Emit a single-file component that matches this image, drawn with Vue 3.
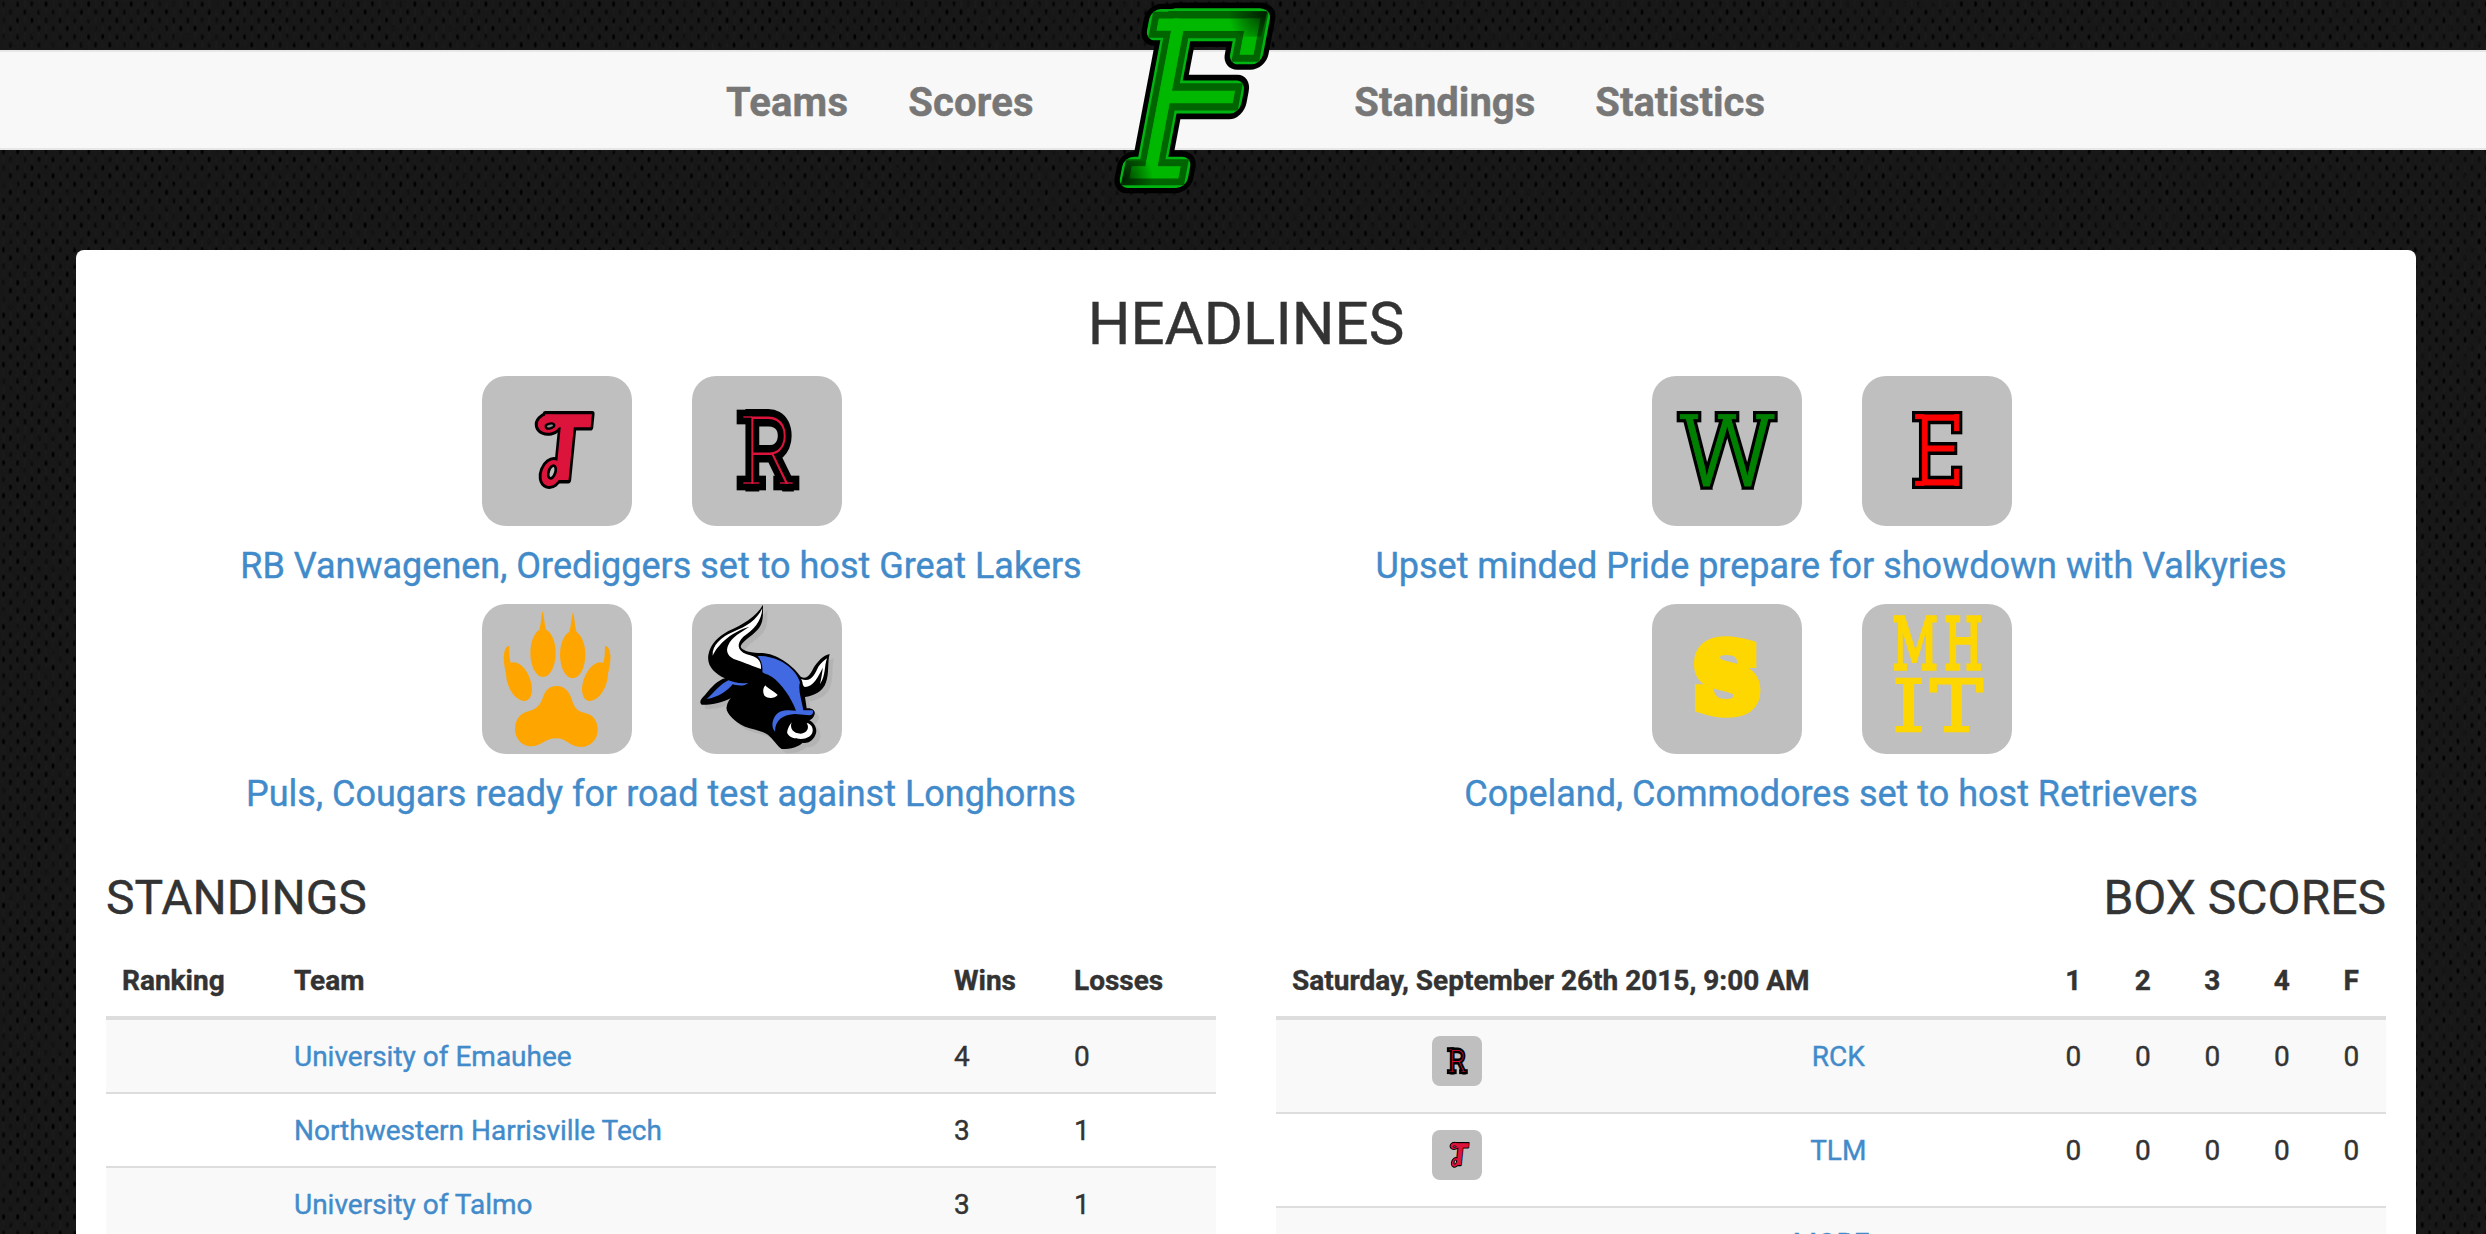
<script setup>
const ctx = document.createElement('canvas').getContext('2d')

// Fits a letter's ink to a box: [x, y, width, height], with an optional slant.
function fit(char, box, family, weight, slant) {
  ctx.font = `${weight} 100px "${family}"`
  const m = ctx.measureText(char)
  const sx = box[2] / (m.actualBoundingBoxRight + m.actualBoundingBoxLeft)
  const sy = box[3] / (m.actualBoundingBoxAscent + m.actualBoundingBoxDescent)
  const tx = box[0] + m.actualBoundingBoxLeft * sx
  const ty = box[1] + box[3] - m.actualBoundingBoxDescent * sy
  return { transform: `matrix(${sx} 0 ${-slant * sy} ${sy} ${tx} ${ty})`, scale: Math.sqrt(sx * sy) }
}

// A letter with optional slab bars, painted once per layer: [colour, outline width].
function letter(char, box, { family = 'DejaVu Serif', weight = 'normal', slant = 0, join = 'miter', slabs = [], layers }) {
  const { transform, scale } = fit(char, box, family, weight, slant)
  const base = box[1] + box[3]
  return layers.flatMap(([color, width]) => [
    {
      tag: 'text',
      text: char,
      attrs: {
        transform,
        'font-family': family,
        'font-weight': weight,
        'font-size': 100,
        fill: color,
        stroke: color,
        'stroke-width': width / scale,
        'stroke-linejoin': join
      }
    },
    ...slabs.map(([x, y, w, h]) => ({
      tag: 'rect',
      attrs: {
        x,
        y,
        width: w,
        height: h,
        fill: color,
        stroke: color,
        'stroke-width': width,
        'stroke-linejoin': join,
        transform: `matrix(1 0 ${-slant} 1 ${slant * base} 0)`
      }
    }))
  ])
}
const path = (d, fill, extra = {}) => ({ tag: 'path', attrs: { d, fill, ...extra } })
const oval = (cx, cy, rx, ry, attrs) => ({ tag: 'ellipse', attrs: { cx, cy, rx, ry, ...attrs } })
const ring = (cx, cy, rx, ry, stroke, width, angle, fill = 'none') =>
  oval(cx, cy, rx, ry, { fill, stroke, 'stroke-width': width, transform: `rotate(${angle} ${cx} ${cy})` })

const bull =
  'M879 29C878 55 883 85 862 105C840 128 815 140 812 155C815 165 835 172 866 174C910 170 965 205 992 245C1010 255 1020 240 1030 220C1042 200 1060 180 1079 177C1072 200 1078 235 1068 262C1060 290 1030 303 1005 306L1010 340C1030 338 1038 350 1033 360C1030 370 1022 374 1018 376C1040 388 1042 410 1036 420C1028 440 1010 446 998 443C985 455 965 462 935 462C925 455 915 440 900 425C880 405 850 405 825 395C790 380 765 350 770 335C772 322 778 312 785 308C755 325 715 330 695 329C685 320 695 310 705 300C725 275 745 255 765 250C735 235 710 215 715 180C722 145 745 125 775 108C815 90 860 65 879 29Z'

const gold = { layers: [['#ffd700', 8]] }
const tee = { family: 'DejaVu Sans', weight: 'bold', slant: 0.1, join: 'round' }

const logos = {
  T: {
    box: '36 33 450 450',
    shapes: [
      ring(237, 176, 24, 17, '#000', 38, -12),
      ring(245, 324, 18, 30, '#000', 38, 22),
      ...letter('T', [205, 144, 142, 200], { ...tee, layers: [['#000', 18]] }),
      ring(237, 176, 24, 17, '#dc143c', 20, -12),
      ring(245, 324, 18, 30, '#dc143c', 21, 22),
      ...letter('T', [205, 144, 142, 200], { ...tee, layers: [['#dc143c', 0]] }),
      ring(240, 183, 13, 7, '#000', 7, -12, '#8a8a8a'),
      ring(246, 321, 10, 20, '#000', 8, 18, '#bfbfbf')
    ]
  },
  R: {
    box: '666 33 450 450',
    shapes: letter('R', [843, 154, 112, 203], {
      family: 'Roboto',
      weight: 100,
      slabs: [[820, 154, 26, 4], [820, 352, 48, 4], [930, 352, 38, 4]],
      layers: [['#000', 40], ['#dc143c', 0]]
    })
  },
  W: {
    box: '36 33 450 450',
    shapes: letter('W', [134, 150, 254, 212], {
      family: 'Roboto',
      weight: 300,
      slabs: [[121, 149, 52, 12], [235, 149, 52, 12], [350, 149, 52, 12]],
      layers: [['#000', 22], ['#008000', 3]]
    })
  },
  E: {
    box: '666 33 450 450',
    shapes: letter('E', [847, 149, 109, 212], {
      family: 'Roboto',
      weight: 300,
      slabs: [[827, 149, 24, 12], [827, 349, 24, 12], [944, 149, 12, 48], [944, 313, 12, 48]],
      layers: [['#000', 22], ['#ff0000', 3]]
    })
  },
  S: {
    box: '36 27 450 450',
    shapes: letter('S', [180, 149, 163, 200], { weight: 'bold', layers: [['#ffd700', 40]] })
  },
  MHIT: {
    box: '666 27 450 450',
    shapes: [
      ...letter('M', [763, 64, 125, 157], gold),
      ...letter('H', [919, 64, 101, 157], gold),
      ...letter('I', [770, 253, 71, 156], gold),
      ...letter('T', [871, 253, 156, 156], gold)
    ]
  },
  paw: {
    box: '36 27 450 450',
    shapes: [
      oval(219, 174, 38, 72, { fill: '#ffa500' }),
      oval(308, 179, 38, 71, { fill: '#ffa500' }),
      oval(147, 260, 34, 61, { fill: '#ffa500', transform: 'rotate(-22 147 260)' }),
      oval(375, 260, 34, 61, { fill: '#ffa500', transform: 'rotate(22 375 260)' }),
      path('M218 47C213 65 213 92 206 112H231C223 92 223 65 218 47ZM309 50C304 68 303 95 297 115H321C314 95 314 68 309 50Z', '#ffa500'),
      path('M118 152C100 155 96 190 109 240L123 205C116 185 118 165 118 152ZM405 152C423 155 427 190 413 240L399 205C406 185 404 165 405 152Z', '#ffa500'),
      path('M260 273C290 273 302 298 308 322C318 350 335 352 352 356C375 362 383 385 383 405C383 435 360 456 332 456C300 456 290 430 258 430C225 430 215 454 182 454C155 454 135 430 135 403C135 375 150 355 175 349C195 343 208 335 217 312C225 288 235 273 260 273Z', '#ffa500')
    ]
  },
  bull: {
    box: '666 27 450 450',
    shapes: [
      path(bull, '#000', { opacity: 0.06, transform: 'translate(13 13)' }),
      path(bull, '#000'),
      path('M877 40C875 80 850 105 820 125C800 145 800 165 830 178C860 185 875 195 873 222C850 215 830 205 800 195C775 188 765 170 775 150C785 125 810 115 838 95C790 108 745 145 728 182C725 150 755 125 790 110C830 95 860 75 877 40Z', '#fff'),
      path('M863 183C920 182 975 215 990 262C983 285 995 315 1000 346L1028 346C1032 355 1025 361 1018 361L975 357C940 358 915 375 915 410C900 395 908 360 930 350C945 344 965 346 978 347C965 310 935 265 905 245C890 235 878 235 877 230C879 210 873 195 863 183ZM775 256C790 262 815 268 835 263C825 275 800 272 788 268C775 285 745 308 710 312C735 290 750 268 775 256Z', '#4169e1'),
      path('M886 271C892 280 915 290 923 300C915 310 895 312 884 303C878 292 878 280 886 271ZM993 252C1025 265 1035 235 1045 215C1052 205 1062 197 1071 190C1062 215 1068 240 1050 268C1055 245 1058 225 1058 218C1045 245 1030 275 1005 276C995 272 1000 260 993 252ZM965 382C955 395 950 410 952 415C958 428 975 432 992 432C1015 432 1030 420 1028 403C1027 392 1018 385 1010 384C1020 400 1010 414 992 416C970 416 958 400 965 382Z', '#fff')
    ]
  }
}

const brandBox = [162, 57, 257, 477]
const brandStyle = {
  family: 'Roboto',
  weight: 300,
  slant: 0.19,
  slabs: [[117, 57, 60, 34], [120, 500, 144, 34], [380, 57, 39, 106]]
}
const brand = [
  ...letter('F', brandBox, { ...brandStyle, join: 'round', layers: [['#000', 92], ['#00b512', 60]] }),
  ...letter('F', brandBox, { ...brandStyle, layers: [['#006400', 44], ['#00b800', 3]] })
]

const headlines = [
  { logos: ['T', 'R'], title: 'RB Vanwagenen, Orediggers set to host Great Lakers' },
  { logos: ['W', 'E'], title: 'Upset minded Pride prepare for showdown with Valkyries' },
  { logos: ['paw', 'bull'], title: 'Puls, Cougars ready for road test against Longhorns' },
  { logos: ['S', 'MHIT'], title: 'Copeland, Commodores set to host Retrievers' }
]
const standings = [
  { team: 'University of Emauhee', wins: 4, losses: 0 },
  { team: 'Northwestern Harrisville Tech', wins: 3, losses: 1 },
  { team: 'University of Talmo', wins: 3, losses: 1 }
]
const games = [
  { logo: 'R', team: 'RCK', points: [0, 0, 0, 0, 0] },
  { logo: 'T', team: 'TLM', points: [0, 0, 0, 0, 0] },
  { team: 'MORE', points: [] }
]
</script>

<template>
  <div class="page">
    <nav class="navbar">
      <div class="links left"><a>Teams</a><a>Scores</a></div>
      <div class="links right"><a>Standings</a><a>Statistics</a></div>
      <svg class="brand" viewBox="0 0 630 630">
        <defs>
          <radialGradient id="shadeA" gradientUnits="userSpaceOnUse" cx="525" cy="40" r="110">
            <stop offset="0" stop-color="#000" stop-opacity=".7" /><stop offset="1" stop-color="#000" stop-opacity="0" />
          </radialGradient>
          <radialGradient id="shadeB" gradientUnits="userSpaceOnUse" cx="100" cy="535" r="90">
            <stop offset="0" stop-color="#000" stop-opacity=".7" /><stop offset="1" stop-color="#000" stop-opacity="0" />
          </radialGradient>
        </defs>
        <component :is="s.tag" v-for="(s, i) in brand" :key="i" v-bind="s.attrs">{{ s.text }}</component>
        <path d="M400 34H532L514 110H400Z" fill="url(#shadeA)" />
        <path d="M108 482H190V556H92Z" fill="url(#shadeB)" />
      </svg>
    </nav>

    <main class="panel">
      <h1>HEADLINES</h1>
      <section class="headlines">
        <article v-for="h in headlines" :key="h.title">
          <div class="tiles">
            <svg v-for="l in h.logos" :key="l" class="tile" :viewBox="logos[l].box">
              <component :is="s.tag" v-for="(s, i) in logos[l].shapes" :key="i" v-bind="s.attrs">{{ s.text }}</component>
            </svg>
          </div>
          <a>{{ h.title }}</a>
        </article>
      </section>

      <div class="columns">
        <section>
          <h2>STANDINGS</h2>
          <table>
            <colgroup><col class="rank" /><col /><col class="wins" /><col class="losses" /></colgroup>
            <thead>
              <tr><th>Ranking</th><th>Team</th><th>Wins</th><th>Losses</th></tr>
            </thead>
            <tbody>
              <tr v-for="r in standings" :key="r.team">
                <td></td><td><a>{{ r.team }}</a></td><td>{{ r.wins }}</td><td>{{ r.losses }}</td>
              </tr>
            </tbody>
          </table>
        </section>
        <section>
          <h2 class="end">BOX SCORES</h2>
          <table class="box">
            <colgroup><col class="crest" /><col /><col v-for="n in 5" :key="n" class="pts" /></colgroup>
            <thead>
              <tr>
                <th colspan="2">Saturday, September 26th 2015, 9:00 AM</th>
                <th v-for="p in ['1', '2', '3', '4', 'F']" :key="p">{{ p }}</th>
              </tr>
            </thead>
            <tbody>
              <tr v-for="g in games" :key="g.team">
                <td>
                  <svg v-if="g.logo" class="tile small" :viewBox="logos[g.logo].box">
                    <component :is="s.tag" v-for="(s, i) in logos[g.logo].shapes" :key="i" v-bind="s.attrs">{{ s.text }}</component>
                  </svg>
                </td>
                <td :class="{ shifted: !g.logo }"><a>{{ g.team }}</a></td>
                <td v-for="n in 5" :key="n">{{ g.points[n - 1] }}</td>
              </tr>
            </tbody>
          </table>
        </section>
      </div>
    </main>
  </div>
</template>

<style>
body {
  margin: 0;
  overflow: hidden;
}
</style>

<style scoped>
.page {
  box-sizing: border-box;
  height: 1234px;
  overflow: hidden;
  padding-top: 50px;
  font-family: Roboto, "Liberation Sans", sans-serif;
  font-size: 28px;
  line-height: 40px;
  color: #333;
  -webkit-text-stroke: 0.4px currentColor;
  background-color: #181818;
  background-image:
    url("data:image/svg+xml,%3Csvg xmlns='http://www.w3.org/2000/svg' width='500' height='500'%3E%3Cfilter id='n' x='0' y='0' width='100%25' height='100%25' color-interpolation-filters='sRGB'%3E%3CfeTurbulence type='fractalNoise' baseFrequency='.16 .09' numOctaves='2' stitchTiles='stitch'/%3E%3CfeColorMatrix values='0 0 0 0 .09 0 0 0 0 .09 0 0 0 0 .09 2.5 0 0 0 -.95'/%3E%3C/filter%3E%3Crect width='500' height='500' filter='url(%23n)'/%3E%3C/svg%3E"),
    radial-gradient(ellipse 2px 4px at 3.5px 4px, #000 40%, transparent),
    radial-gradient(ellipse 2px 4px at 10.5px 12px, #000 40%, transparent),
    linear-gradient(90deg, transparent 30%, #1c1c1c 50%, transparent 70%);
  background-size: 500px 500px, 14.2px 16.4px, 14.2px 16.4px, 7.1px 8px;
}
svg {
  -webkit-text-stroke: initial;
  overflow: visible;
}
a {
  color: #428bca;
  -webkit-text-stroke-color: currentColor;
}
.navbar {
  position: relative;
  box-sizing: border-box;
  height: 100px;
  display: flex;
  justify-content: space-between;
  align-items: center;
  padding: 6px 721px 0 726px;
  background: #f8f8f8;
  border-top: 2px solid #e7e7e7;
  border-bottom: 2px solid #e7e7e7;
}
.links {
  display: flex;
  gap: 60px;
}
.links a {
  color: #777;
  font-size: 40px;
  font-weight: 700;
}
.left a {
  letter-spacing: 0.2px;
}
.brand {
  position: absolute;
  left: 1090px;
  top: -52px;
  width: 210px;
  height: 210px;
}
.panel {
  box-sizing: border-box;
  height: 1100px;
  margin: 100px 70px 0 76px;
  padding: 41px 30px 0;
  background: #fff;
  border-radius: 8px;
}
h1,
h2 {
  margin: 0;
  font-weight: 400;
}
h1 {
  font-size: 60px;
  line-height: 66px;
  text-align: center;
}
.headlines {
  display: grid;
  grid-template-columns: 1fr 1fr;
  column-gap: 60px;
  margin-top: 19px;
}
article {
  height: 228px;
  text-align: center;
  font-size: 36px;
  line-height: 52px;
}
.tiles {
  display: flex;
  justify-content: center;
  gap: 60px;
  margin-bottom: 14px;
  padding-left: 2px;
}
.tile {
  display: block;
  width: 150px;
  height: 150px;
  border-radius: 24px;
  background: #bfbfbf;
}
.small {
  width: 50px;
  height: 50px;
  margin: 0 auto;
  border-radius: 8px;
}
.columns {
  display: grid;
  grid-template-columns: 1fr 1fr;
  gap: 60px;
  margin-top: 39px;
}
h2 {
  font-size: 48px;
  line-height: 53px;
  margin-bottom: 19px;
}
.end {
  text-align: right;
}
table {
  width: 100%;
  table-layout: fixed;
  border-collapse: separate;
  border-spacing: 0;
}
th,
td {
  padding: 17px 16px 15px;
  text-align: left;
  vertical-align: top;
  box-sizing: border-box;
}
th {
  font-weight: 700;
  height: 77px;
  padding-top: 18px;
  border-bottom: 4px solid #ddd;
}
td {
  height: 74px;
  border-bottom: 2px solid #ddd;
}
tbody tr:nth-child(odd) {
  background: #f9f9f9;
}
.rank {
  width: 172px;
}
.wins {
  width: 120px;
}
.losses {
  width: 158px;
}
.crest {
  width: 362px;
}
.pts {
  width: 69.5px;
}
.box td {
  height: 94px;
  text-align: center;
}
.box td:first-child {
  padding-top: 16px;
}
.box th:not(:first-child) {
  text-align: center;
}
.box .shifted {
  padding: 16px 30px 16px 16px;
}
</style>
